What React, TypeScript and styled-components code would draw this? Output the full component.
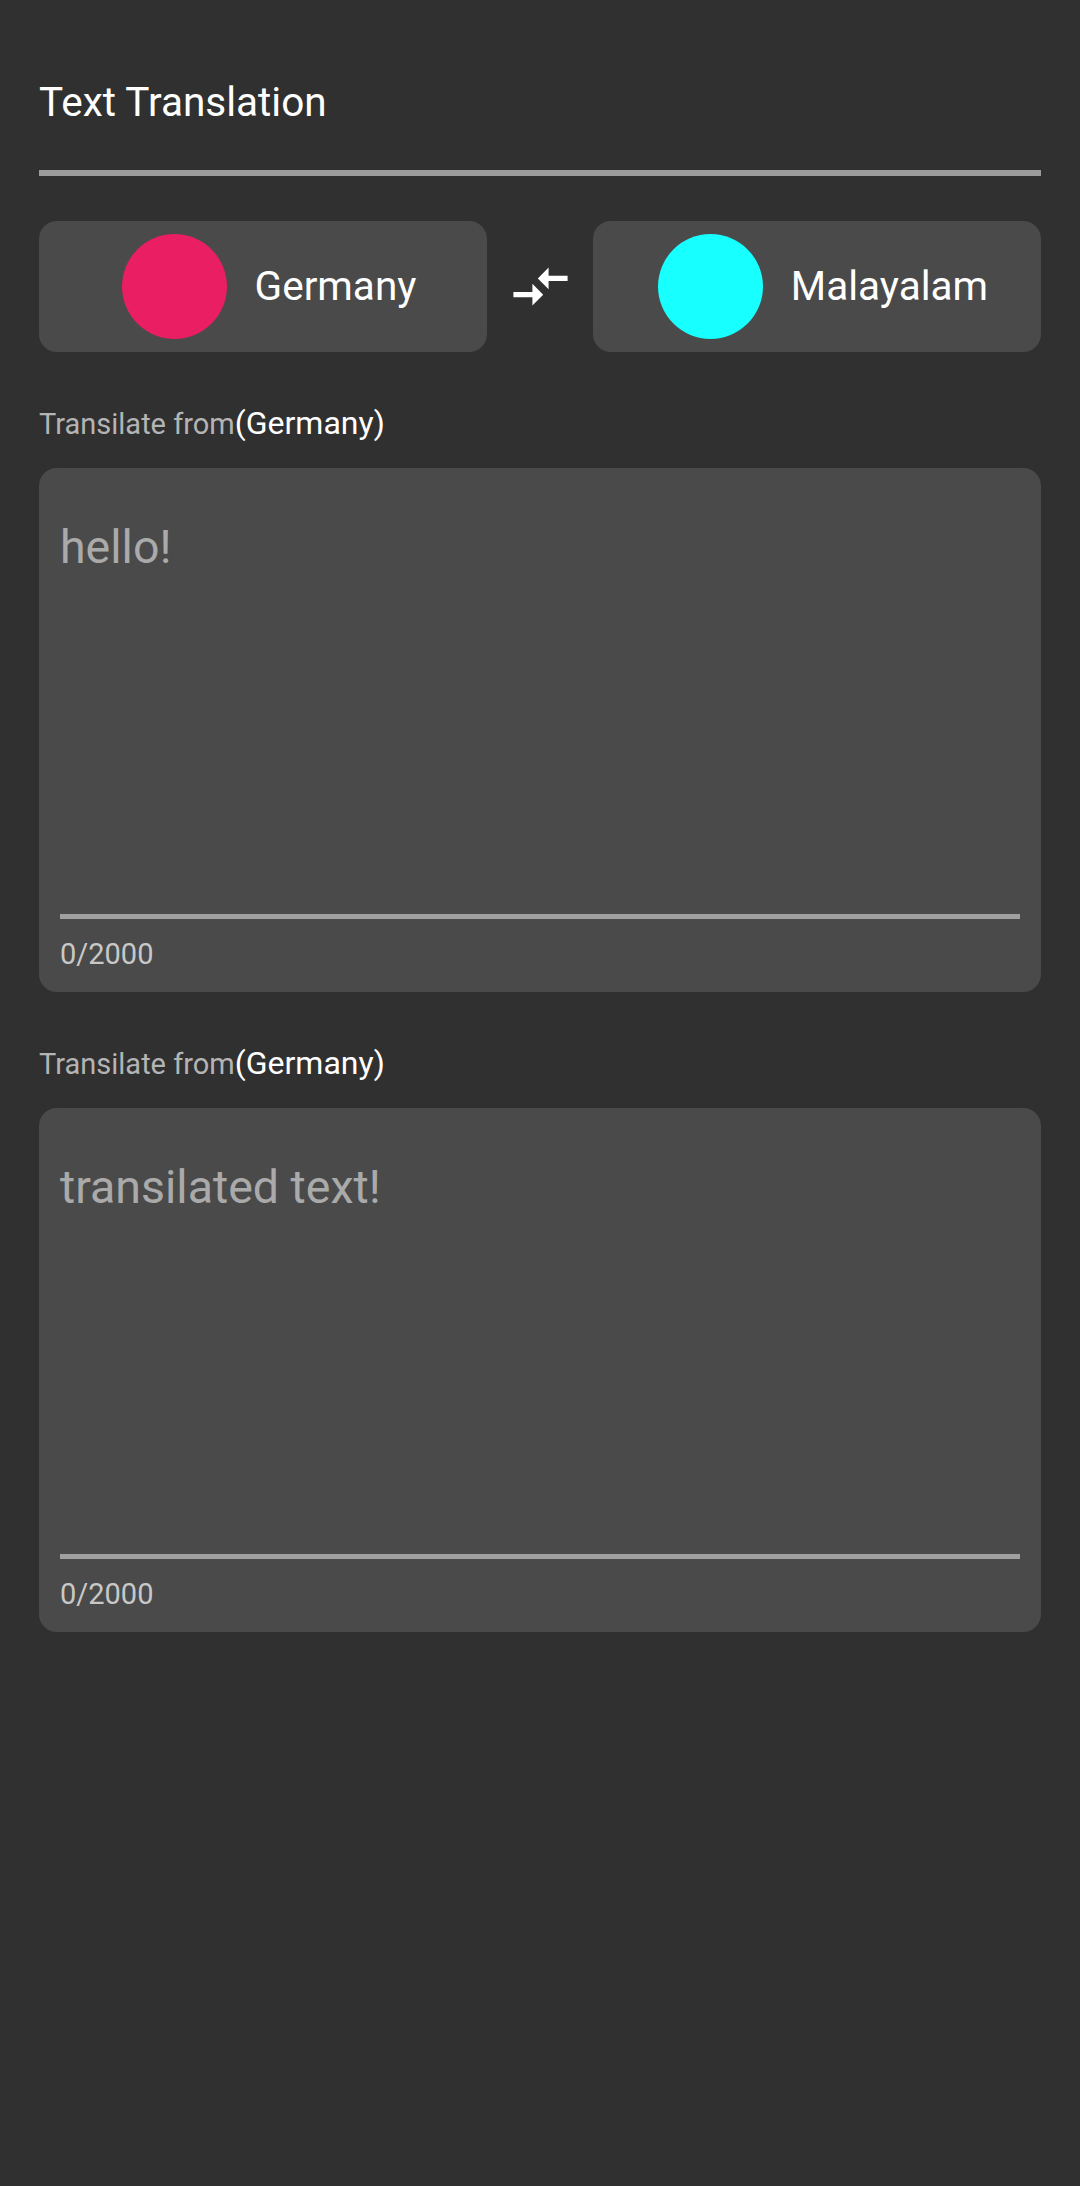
import styled, { createGlobalStyle } from 'styled-components';

const GlobalStyle = createGlobalStyle`
  html, body {
    margin: 0;
    padding: 0;
    background-color: #303030;
    min-height: 100%;
  }
  body {
    font-family: Roboto, 'Noto Sans', 'Liberation Sans', sans-serif;
  }
`;

type TLanguage = {
  name: string;
  color: string;
};

const LanguageCard = ({ name, color }: TLanguage) => (
  <Card>
    <Dot color={color} />
    <CardName>{name}</CardName>
  </Card>
);

const SwapIcon = () => (
  <SwapButton>
    <svg width="65" height="65" viewBox="0 0 24 24" fill="#ffffff">
      <path d="M9.01 14H2v2h7.01v3L13 15l-3.99-4v3zm5.98-1v-3H22V8h-7.01V5L11 9l3.99 4z" />
    </svg>
  </SwapButton>
);

const TextPanel = ({ label, lang, placeholder }: { label: string; lang: string; placeholder: string }) => (
  <>
    <Label>
      {label}
      <LabelLang>({lang})</LabelLang>
    </Label>
    <Box>
      <Placeholder>{placeholder}</Placeholder>
      <Underline />
      <Counter>0/2000</Counter>
    </Box>
  </>
);

const App = () => {
  return (
    <Page>
      <GlobalStyle />
      <Title>Text Translation</Title>
      <TitleLine />
      <LanguageRow>
        <LanguageCard name="Germany" color="#e91e63" />
        <SwapIcon />
        <LanguageCard name="Malayalam" color="#18ffff" />
      </LanguageRow>
      <TextPanel label="Transilate from" lang="Germany" placeholder="hello!" />
      <TextPanel label="Transilate from" lang="Germany" placeholder="transilated text!" />
    </Page>
  );
};

export default App;

const Page = styled('div')`
  display: flex;
  flex-direction: column;
  min-height: 2186px;
  box-sizing: border-box;
  padding: 79px 39px 0;
  background-color: #303030;
`;

const Title = styled('div')`
  font-size: 40.5px;
  line-height: 47px;
  font-weight: 400;
  color: #ffffff;
`;

const TitleLine = styled('div')`
  height: 6px;
  margin-top: 44px;
  background-color: #9c9c9c;
`;

const LanguageRow = styled('div')`
  display: flex;
  justify-content: space-between;
  align-items: center;
  margin-top: 45px;
`;

const Card = styled('div')`
  display: flex;
  align-items: center;
  justify-content: center;
  gap: 28px;
  box-sizing: border-box;
  width: 448px;
  height: 131px;
  padding-left: 12px;
  border-radius: 18px;
  background-color: #4a4a4a;
`;

const Dot = styled('div')<{ color: string }>`
  width: 105px;
  height: 105px;
  border-radius: 50%;
  background-color: ${({ color }) => color};
`;

const CardName = styled('span')`
  font-size: 40.5px;
  line-height: 47px;
  color: #ffffff;
`;

const SwapButton = styled('div')`
  display: flex;
  align-items: center;
  justify-content: center;
  width: 65px;
  height: 65px;
`;

const Label = styled('div')`
  margin-top: 52px;
  font-size: 29px;
  line-height: 38px;
  color: #b4b4b4;
`;

const LabelLang = styled('span')`
  font-size: 32px;
  color: #ffffff;
`;

const Box = styled('div')`
  display: flex;
  flex-direction: column;
  box-sizing: border-box;
  height: 524px;
  margin-top: 25px;
  padding: 52px 21px 21px;
  border-radius: 18px;
  background-color: #4a4a4a;
`;

const Placeholder = styled('div')`
  flex: 1;
  font-size: 46.5px;
  line-height: 54px;
  color: #aaaaaa;
`;

const Underline = styled('div')`
  height: 5px;
  background-color: #a0a0a0;
`;

const Counter = styled('div')`
  margin-top: 19px;
  font-size: 29px;
  line-height: 33px;
  color: #c8c8c8;
`;
